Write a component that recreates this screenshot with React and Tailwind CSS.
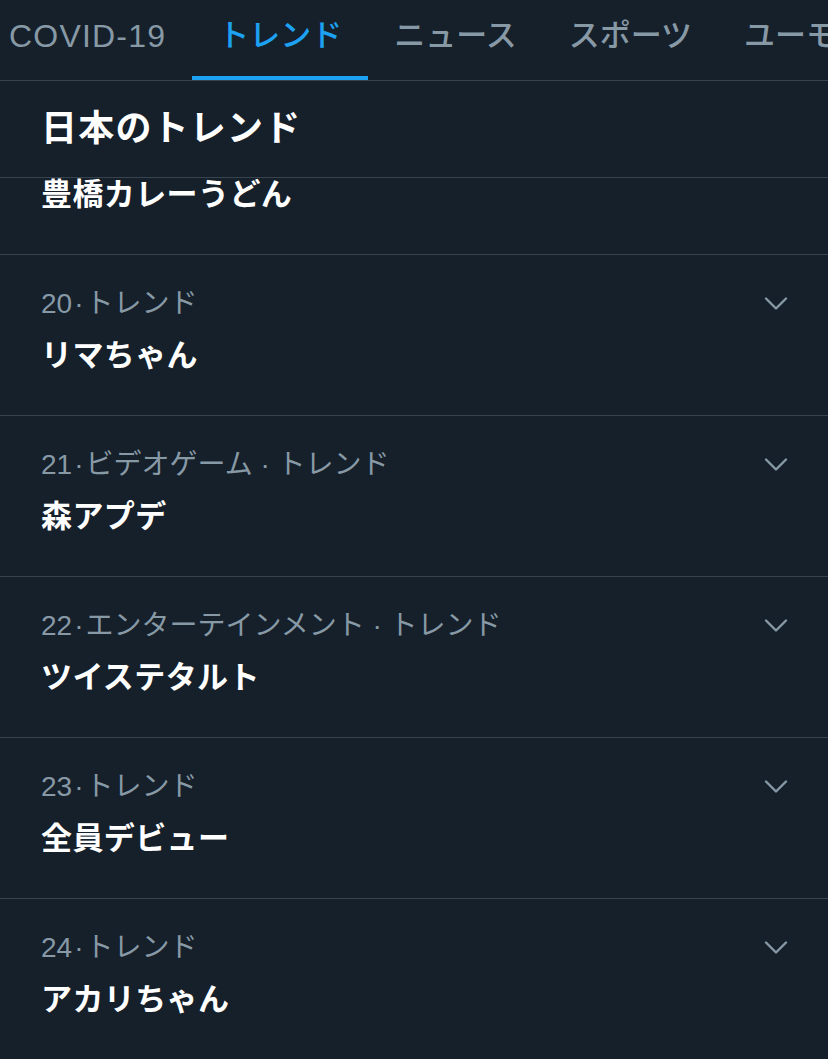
import React from "react";

const rows = [
  { meta: "", title: "豊橋カレーうどん", noChevron: true },
  { meta: ["20", "トレンド"], title: "リマちゃん" },
  { meta: ["21", "ビデオゲーム · トレンド"], title: "森アプデ" },
  { meta: ["22", "エンターテインメント · トレンド"], title: "ツイステタルト" },
  { meta: ["23", "トレンド"], title: "全員デビュー" },
  { meta: ["24", "トレンド"], title: "アカリちゃん" },
];

function Chevron() {
  return (
    <svg width="24" height="14" viewBox="0 0 24 14" className="mt-[9px] shrink-0">
      <polyline
        points="2,1.5 12,11.5 22,1.5"
        fill="none"
        stroke="#8899a6"
        strokeWidth="2.4"
        strokeLinecap="round"
        strokeLinejoin="round"
      />
    </svg>
  );
}

const tabs = ["COVID-19", "トレンド", "ニュース", "スポーツ", "ユーモア"];

export default function App() {
  return (
    <div className="w-[828px] h-[1059px] overflow-hidden bg-[#15202b] font-['Liberation_Sans','Noto_Sans_CJK_JP',sans-serif]">
      {/* tabs */}
      <div className="h-[81px] border-b border-[#38444d] overflow-hidden">
        <div className="flex ml-[-17px] whitespace-nowrap">
          {tabs.map((t, i) => (
            <div key={t} className="flex flex-col justify-between h-[80px] shrink-0">
              <div
                className={
                  "px-[26px] pt-[16px] leading-[40px] text-[31px] font-medium " +
                  (i === 1 ? "text-[#1da1f2]" : "text-[#8899a6]") +
                  (i === 0 ? " tracking-[1.2px] text-[32px]" : "")
                }
              >
                {t}
              </div>
              <div className={"h-[4px] " + (i === 1 ? "bg-[#1da1f2]" : "")} />
            </div>
          ))}
        </div>
      </div>
      {/* header */}
      <div className="h-[97px] border-b border-[#38444d] flex items-center px-[41px] relative z-10 bg-[#15202b]">
        <h2 className="text-[36px] font-bold text-white leading-[44px] tracking-[1.2px]">日本のトレンド</h2>
      </div>
      {/* list */}
      <div className="overflow-hidden">
        <div className="mt-[-84px]">
          {rows.map((r, i) => (
            <div key={i} className="h-[161px] border-b border-[#38444d] flex items-start justify-between pl-[41px] pr-[40px] pt-[33px]">
              <div className="flex flex-col">
                <div className="text-[28px] leading-[32px] text-[#8899a6] h-[32px]">
                  {r.meta ? (
                    <>
                      <span>{r.meta[0]}</span>
                      <span className="mx-[2px]">·</span>
                      <span>{r.meta[1]}</span>
                    </>
                  ) : null}
                </div>
                <div className="mt-[16px] text-[31px] leading-[40px] font-bold text-white tracking-[0.4px]">{r.title}</div>
              </div>
              {!r.noChevron && <Chevron />}
            </div>
          ))}
        </div>
      </div>
    </div>
  );
}
